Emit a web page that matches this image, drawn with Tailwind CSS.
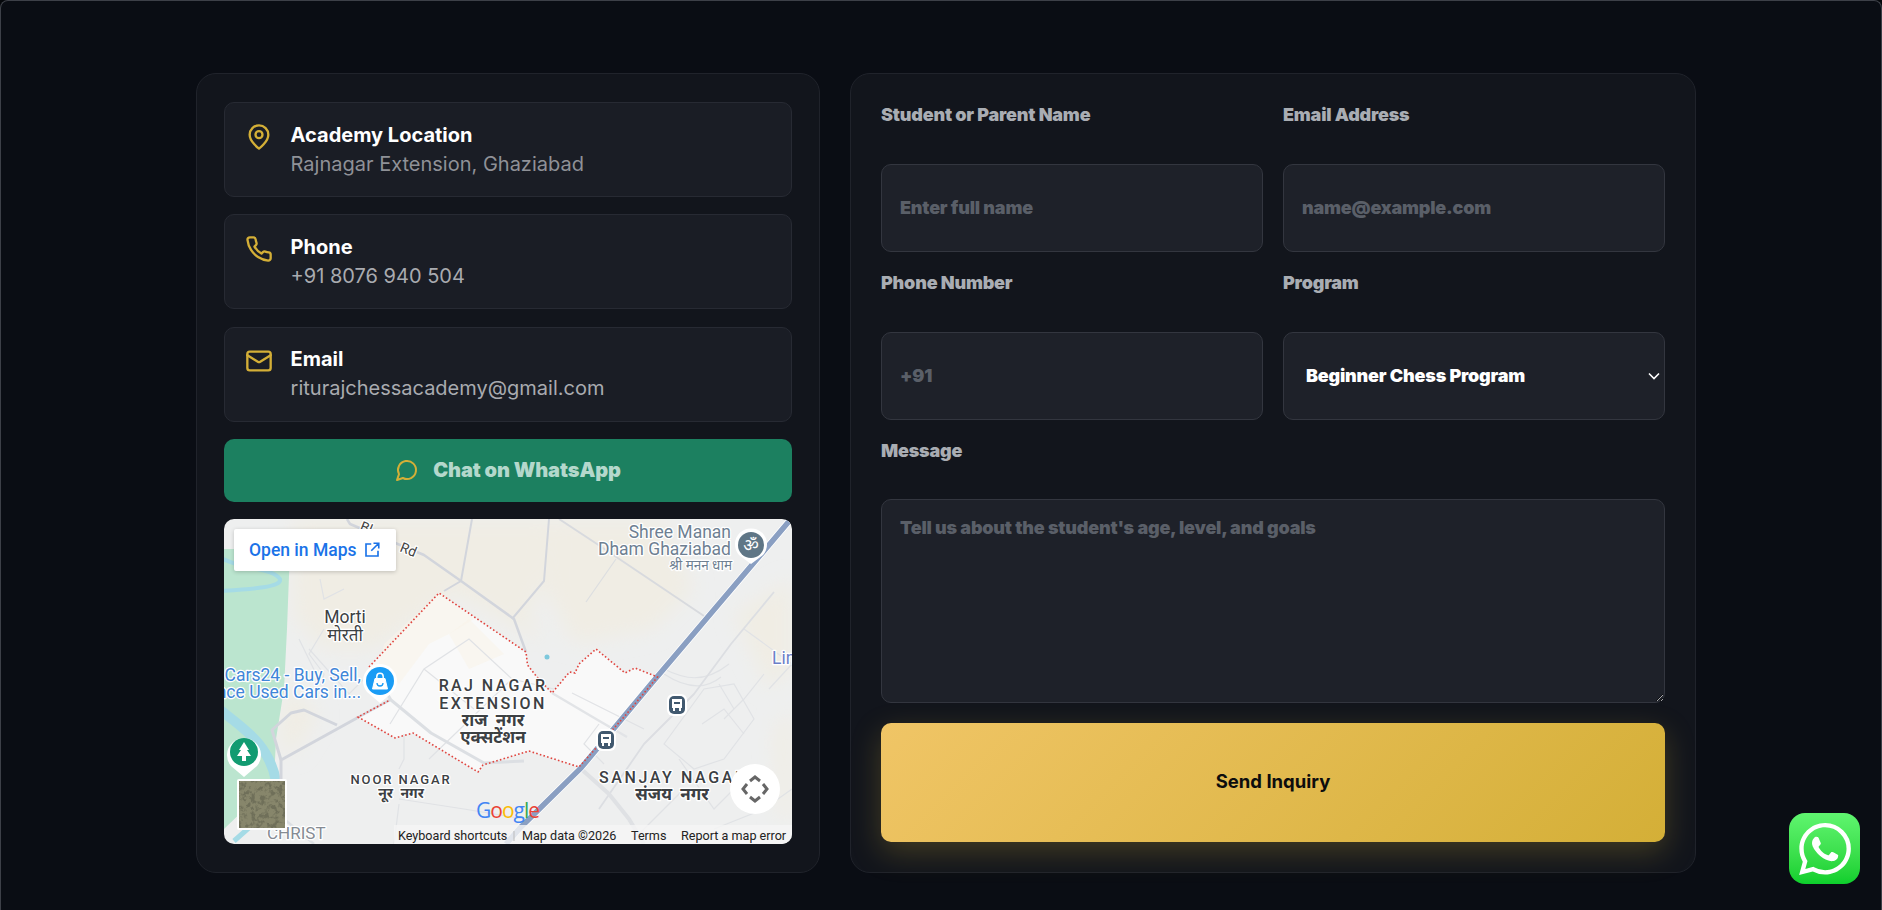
<!DOCTYPE html>
<html lang="en" class="h-[910px] overflow-hidden">
<head>
<meta charset="UTF-8">
<meta name="viewport" content="width=device-width, initial-scale=1.0">
<title>Contact</title>
<script src="https://cdn.jsdelivr.net/npm/@tailwindcss/browser@4"></script>
</head>
<body class="h-[910px] bg-[#05070b] font-['Inter',sans-serif] overflow-hidden">

<div class="h-[910px] bg-[#0a0d14] border border-b-0 border-[#3d4048] rounded-t-[8px] pt-[72px] pl-[195px]">
  <div class="flex gap-[30px] w-[1500px]">

    <!-- contact column -->
    <section class="w-[624px] h-[800px] shrink-0 bg-[#12151c] border border-[#20232b] rounded-[20px] p-[27px] pt-[28px] flex flex-col gap-[17.6px]">

      <div class="h-[94.8px] bg-[#1a1d25] border border-[#272a33] rounded-[10px] px-[20px] py-[17.6px] flex gap-[17.6px]">
        <svg class="w-[28px] h-[28px] mt-[2px] shrink-0" viewBox="0 0 24 24" fill="none" stroke="#d4af37" stroke-width="2" stroke-linecap="round" stroke-linejoin="round"><path d="M20 10c0 6-8 12-8 12s-8-6-8-12a8 8 0 0 1 16 0Z"/><circle cx="12" cy="10" r="3"/></svg>
        <div class="text-[20px] leading-[29px]">
          <div class="font-bold text-white">Academy Location</div>
          <div class="text-[#8f9197]">Rajnagar Extension, Ghaziabad</div>
        </div>
      </div>

      <div class="h-[94.8px] bg-[#1a1d25] border border-[#272a33] rounded-[10px] px-[20px] py-[17.6px] flex gap-[17.6px]">
        <svg class="w-[28px] h-[28px] mt-[2px] shrink-0" viewBox="0 0 24 24" fill="none" stroke="#d4af37" stroke-width="2" stroke-linecap="round" stroke-linejoin="round"><path d="M22 16.92v3a2 2 0 0 1-2.18 2 19.79 19.79 0 0 1-8.63-3.07 19.5 19.5 0 0 1-6-6 19.79 19.79 0 0 1-3.07-8.67A2 2 0 0 1 4.11 2h3a2 2 0 0 1 2 1.72 12.84 12.84 0 0 0 .7 2.81 2 2 0 0 1-.45 2.11L8.09 9.91a16 16 0 0 0 6 6l1.27-1.27a2 2 0 0 1 2.11-.45 12.84 12.84 0 0 0 2.81.7A2 2 0 0 1 22 16.92z"/></svg>
        <div class="text-[20px] leading-[29px]">
          <div class="font-bold text-white">Phone</div>
          <div class="text-[#a9abb0]">+91 8076 940 504</div>
        </div>
      </div>

      <div class="h-[94.8px] bg-[#1a1d25] border border-[#272a33] rounded-[10px] px-[20px] py-[17.6px] flex gap-[17.6px]">
        <svg class="w-[28px] h-[28px] mt-[2px] shrink-0" viewBox="0 0 24 24" fill="none" stroke="#d4af37" stroke-width="2" stroke-linecap="round" stroke-linejoin="round"><rect x="2" y="4" width="20" height="16" rx="2"/><path d="m22 7-8.97 5.7a1.94 1.94 0 0 1-2.06 0L2 7"/></svg>
        <div class="text-[20px] leading-[29px]">
          <div class="font-bold text-white">Email</div>
          <div class="text-[#a9abb0]">riturajchessacademy@gmail.com</div>
        </div>
      </div>

      <a class="h-[62.4px] bg-[#1c8060] rounded-[10px] flex items-center justify-center gap-[14px] text-[20px] tracking-[-0.1px] font-black text-[#b4d8cc]">
        <svg class="w-[24px] h-[24px]" viewBox="0 0 24 24" fill="none" stroke="#d4af37" stroke-width="2" stroke-linecap="round" stroke-linejoin="round"><path d="M7.9 20A9 9 0 1 0 4 16.1L2 22Z"/></svg>
        Chat on WhatsApp
      </a>

      <!-- map -->
      <div class="relative h-[325px] rounded-[10px] overflow-hidden bg-[#eeefef]">
        <svg class="block" width="568" height="325" viewBox="0 0 568 325" font-family="Roboto, 'Noto Sans', sans-serif">
          <defs>
            <filter id="soft" x="-20%" y="-20%" width="140%" height="140%"><feGaussianBlur stdDeviation="10"/></filter>
            <filter id="grain" x="0" y="0" width="100%" height="100%"><feTurbulence type="fractalNoise" baseFrequency="0.22" numOctaves="3" seed="4"/><feColorMatrix values="0 0 0 0 0.16  0 0 0 0 0.16  0 0 0 0 0.1  3.5 3.5 0 0 -3.3"/></filter>
          </defs>

          <!-- land tints -->
          <g filter="url(#soft)" fill="#f0ede4">
            <path d="M68 0H330L320 60 305 95 320 125 230 75 150 130 100 130 70 100Z"/>
            <path d="M330 0H440L470 70 430 110 350 125 320 70Z"/>
            <path d="M510 95 568 60V150L545 170Z"/>
            <path d="M550 210 568 190V300H555Z"/>
            <path d="M60 165 95 195 70 235 55 230Z"/>
          </g>
          <path d="M0 30H66L63 110 60 170 52 220 50 262 0 310Z" fill="#bbe5cf"/>
          <path d="M-5 38C20 52 48 48 56 60 58 68 30 70-5 72" fill="none" stroke="#a5dbe6" stroke-width="4"/>
          <path d="M-5 190C20 210 45 225 52 262" fill="none" stroke="#a5dbe6" stroke-width="10"/>
          <path d="M10 322 35 300 48 300" fill="none" stroke="#a5dbe6" stroke-width="5"/>

          <!-- raj nagar area -->
          <path d="M215 74 302 133 303.5 146 313 158 328 174 345.5 153 351 154 355 145 372 130 401 154 411 149 433.5 158 355 248 305 232 259 246 254 253 189 214 171 219 134 198 166 181 145 148Z" fill="#f9f9f9"/>
          <path d="M215 74 160 125 155 145 175 165 205 125 225 115 250 100Z" fill="#f8f3ea" opacity=".6"/>
          <path d="M225 115 245 100 280 135 245 150Z" fill="#f8f4ea" opacity=".6"/>

          <!-- thin streets -->
          <g fill="none" stroke="#e0e2e5" stroke-width="1.2">
            <path d="M75 120 97 165 100 155 85 135 100 110"/>
            <path d="M96 60 100 80 120 70M85 130 125 175 140 160"/>
            <path d="M166 205 200 150 245 120 288 160 205 240"/>
            <path d="M200 150 250 190M288 160 330 170M180 215 180 240 175 250M175 285 170 325M175 280 240 290 300 300"/>
            <path d="M348 174 420 210M375 205 360 225 380 245"/>
            <path d="M440 225 480 170 510 165 530 200 500 240 470 250 440 225ZM478 205 500 190 520 215M455 240 490 290 510 270M495 165 510 190"/>
            <path d="M520 110 568 145 545 170M500 200 520 180 540 155M410 320 460 270M490 310 540 290 568 270"/>
            <path d="M440 155C460 168 480 172 497 158"/>
            <path d="M440 150C460 160 480 165 505 145"/>
          </g>

          <!-- roads -->
          <g fill="none" stroke="#d2d5dc" stroke-width="2.5" stroke-linejoin="round">
            <path d="M123 0 126 5 200 36 237 62 290 100 302 133"/>
            <path d="M248 0 237 62 220 72" stroke-width="2"/>
            <path d="M325 0 320 62 288 100" stroke-width="2"/>
            <path d="M335 0 373 25 480 97" stroke="#d8dade" stroke-width="2"/>
            <path d="M392 40 362 83" stroke="#dcdee0" stroke-width="1.2"/>
            <path d="M550 73 507 125 470 175 420 225 375 290" stroke="#dcdee2" stroke-width="1.8"/>
            <path d="M133 199 57 241 57 275" stroke-width="3"/>
            <path d="M57 241 48 211 67 194 80 191 113 206" stroke-width="3"/>
            <path d="M133 199 166 181"/>
            <path d="M148 150 167 181 207 214 260 244 300 242" stroke="#dcdfe3" stroke-width="3"/>
            <path d="M328 174 372 200 403 218" stroke="#e2e4e7"/>
            <path d="M355 248 385 275 405 300 420 325" stroke="#dfe1e4" stroke-width="4"/>
            <path d="M60 300 90 325" stroke="#dcdfe3"/>
          </g>

          <!-- highway -->
          <path d="M567 0 427 165 357 249 297 308 282 325" fill="none" stroke="#fff" stroke-width="7"/>
          <path d="M567 0 427 165 357 249 297 308 282 325" fill="none" stroke="#8a9fc2" stroke-width="5.5"/>

          <!-- boundary -->
          <path d="M145 148 215 74 302 133 303.5 146 313 158 328 174 345.5 153 351 154 355 145 372 130 401 154 411 149 433.5 158 400 198 355 248 305 232 259 246 254 253 189 214 171 219 134 198 166 181" fill="none" stroke="#e0453f" stroke-width="1.6" stroke-dasharray="1.6 2.2"/>

          <!-- place labels -->
          <g paint-order="stroke" stroke="#fff" stroke-width="2.5" stroke-linejoin="round">
            <g fill="#6e7f92" font-size="17.5" text-anchor="end">
              <text x="507" y="19">Shree Manan</text>
              <text x="507" y="36">Dham Ghaziabad</text>
              <text x="508" y="51" font-size="13.5">श्री मनन धाम</text>
            </g>
            <text x="548" y="145" fill="#6b7fc8" font-size="17.5">Lin</text>
            <g fill="#3c4043" text-anchor="middle">
              <text x="121" y="104" font-size="17.5">Morti</text>
              <text x="121" y="122" font-size="17">मोरती</text>
              <g font-size="16" font-weight="500" letter-spacing="2.4">
                <text x="269" y="172">RAJ NAGAR</text>
                <text x="269" y="190">EXTENSION</text>
              </g>
              <g font-size="17" font-weight="700">
                <text x="269" y="207" word-spacing="4">राज नगर</text>
                <text x="269" y="224">एक्सटेंशन</text>
              </g>
              <text x="177" y="265" font-size="13" font-weight="500" letter-spacing="1.9">NOOR NAGAR</text>
              <text x="177" y="279" font-size="14" font-weight="700" word-spacing="4">नूर नगर</text>
              <text x="448" y="281" font-size="17" font-weight="700" word-spacing="4">संजय नगर</text>
            </g>
            <text x="375" y="264" fill="#3c4043" font-size="16" font-weight="500" letter-spacing="2.6">SANJAY NAGAR</text>
            <g fill="#3f86d8" font-size="17.5" text-anchor="end">
              <text x="137" y="162">Cars24 - Buy, Sell,</text>
              <text x="137" y="179">nce Used Cars in...</text>
            </g>
            <text x="43" y="320" fill="#858b93" font-size="17">CHRIST</text>
            <text x="175" y="32" transform="rotate(22 175 32)" fill="#444" font-size="14">Rd</text>
            <text x="135" y="11" transform="rotate(22 135 11)" fill="#444" font-size="14">Bl</text>
          </g>

          <!-- pins -->
          <path d="M156 184 143 173A17 17 0 1 1 169 173Z" fill="#fff"/>
          <circle cx="156" cy="162" r="14" fill="#1a9cf5"/>
          <path d="M151 159.500H161L163.500 170H148.500Z" fill="#fff" stroke="#fff" stroke-linejoin="round"/>
          <path d="M152.800 160V157.500A3.200 3.200 0 0 1 159.200 157.500V160" fill="none" stroke="#fff" stroke-width="1.5"/>
          <path d="M153 164A3 3 0 0 0 159 164" fill="none" stroke="#1a9cf5" stroke-width="1.3"/>
          <path d="M20 258 7 247A17 17 0 1 1 33 247Z" fill="#fff"/>
          <circle cx="20" cy="233" r="14" fill="#129b71"/>
          <path d="M20 223 25 231H23L27 237H22V242H18V237H13L17 231H15Z" fill="#fff"/>
          <path d="M527 45 515 36A16 16 0 1 1 539 36Z" fill="#fff"/>
          <circle cx="527" cy="26" r="13" fill="#5f7686"/>
          <text x="527" y="32" text-anchor="middle" font-size="17" fill="#fff">ॐ</text>
          <g>
            <rect x="372" y="210" width="20" height="22" rx="6" fill="#fff"/>
            <rect x="374" y="212" width="16" height="18" rx="5" fill="#41596f"/>
            <path d="M377 215H387V224H377Z" fill="#fff"/><path d="M379 218H385V220H379Z" fill="#41596f"/>
            <path d="M378 224H380V227H378ZM384 224H386V227H384Z" fill="#fff"/>
            <rect x="443" y="175" width="20" height="22" rx="6" fill="#fff"/>
            <rect x="445" y="177" width="16" height="18" rx="5" fill="#41596f"/>
            <path d="M448 180H458V189H448Z" fill="#fff"/><path d="M450 183H456V185H450Z" fill="#41596f"/>
            <path d="M449 189H451V192H449ZM455 189H457V192H455Z" fill="#fff"/>
          </g>
          <circle cx="323" cy="138" r="2.5" fill="#7dc8dc"/>

          <!-- logo -->
          <text x="252" y="299" font-size="21" font-family="'Open Sans', sans-serif" letter-spacing="-1"><tspan fill="#4285f4">G</tspan><tspan fill="#ea4335">o</tspan><tspan fill="#fbbc05">o</tspan><tspan fill="#4285f4">g</tspan><tspan fill="#34a853">l</tspan><tspan fill="#ea4335">e</tspan></text>

          <!-- satellite thumb -->
          <rect x="13" y="260" width="50" height="51" rx="2" fill="#fff"/>
          <rect x="15" y="262" width="46" height="47" fill="#87866b"/>
          <rect x="15" y="262" width="46" height="47" filter="url(#grain)"/>

          <!-- attribution -->
          <rect x="170" y="306" width="398" height="19" fill="#f5f5f5" opacity=".8"/>
          <g font-size="12.6" fill="#222">
            <text x="174" y="321">Keyboard shortcuts</text>
            <text x="298" y="321">Map data ©2026</text>
            <text x="407" y="321">Terms</text>
            <text x="457" y="321">Report a map error</text>
          </g>
          <path d="M290 312V322" stroke="#bbb"/>
        </svg>

        <a class="absolute left-[10px] top-[10px] w-[162px] h-[42px] bg-white rounded-[2px] shadow-[0_1px_4px_rgba(0,0,0,0.2)] flex items-center pl-[15px] gap-[6px] font-['Roboto',sans-serif] font-medium text-[17.5px] text-[#1a73e8]">
          Open in Maps
          <svg class="w-[18px] h-[18px]" viewBox="0 0 24 24" fill="none" stroke="#1a73e8" stroke-width="2.2"><path d="M11 4H4V20H20V13M14 3H21V10M21 3 11 13"/></svg>
        </a>

        <button class="absolute left-[506px] top-[245px] w-[50px] h-[50px] rounded-full bg-white flex items-center justify-center">
          <svg class="w-[30px] h-[30px]" viewBox="0 0 30 30" fill="none" stroke="#666" stroke-width="3"><path d="M10 7 15 3 20 7M10 23 15 27 20 23M7 10 3 15 7 20M23 10 27 15 23 20"/></svg>
        </button>
      </div>
    </section>

    <!-- inquiry form -->
    <form class="w-[846px] h-[800px] shrink-0 bg-[#12151c] border border-[#20232b] rounded-[20px] p-[30px]">
      <div class="grid grid-cols-2 gap-x-[20px] gap-y-[20px]">
        <div>
          <label class="block mb-[38px] text-[18px] tracking-[-0.2px] leading-[22px] font-black text-[#a9adb3]">Student or Parent Name</label>
          <input type="text" placeholder="Enter full name" class="w-full h-[88px] px-[18px] pb-[2px] bg-[#1e2129] border border-[#33363f] rounded-[10px] text-[18px] tracking-[-0.2px] font-black placeholder:text-[#5a5f68]">
        </div>
        <div>
          <label class="block mb-[38px] text-[18px] tracking-[-0.2px] leading-[22px] font-black text-[#a9adb3]">Email Address</label>
          <input type="email" placeholder="name@example.com" class="w-full h-[88px] px-[18px] pb-[2px] bg-[#1e2129] border border-[#33363f] rounded-[10px] text-[18px] tracking-[-0.2px] font-black placeholder:text-[#5a5f68]">
        </div>
        <div>
          <label class="block mb-[38px] text-[18px] tracking-[-0.2px] leading-[22px] font-black text-[#a9adb3]">Phone Number</label>
          <input type="tel" placeholder="+91" class="w-full h-[88px] px-[18px] pb-[2px] bg-[#1e2129] border border-[#33363f] rounded-[10px] text-[18px] tracking-[-0.2px] font-black placeholder:text-[#5a5f68]">
        </div>
        <div>
          <label class="block mb-[38px] text-[18px] tracking-[-0.2px] leading-[22px] font-black text-[#a9adb3]">Program</label>
          <div class="relative">
            <select class="w-full h-[88px] pl-[22px] pr-[30px] pb-[2px] appearance-none bg-[#1e2129] border border-[#33363f] rounded-[10px] text-[18px] tracking-[-0.2px] font-black text-white">
              <option>Beginner Chess Program</option>
            </select>
            <svg class="absolute right-[5px] top-[40px] w-[12px] h-[8px]" viewBox="0 0 12 8" fill="none" stroke="#fff" stroke-width="1.6"><path d="M1 1.500 6 6.500 11 1.500"/></svg>
          </div>
        </div>
        <div class="col-span-2">
          <label class="block mb-[37px] text-[18px] tracking-[-0.2px] leading-[22px] font-black text-[#a9adb3]">Message</label>
          <textarea placeholder="Tell us about the student's age, level, and goals" class="block w-full h-[203.500px] px-[18px] pt-[14px] bg-[#1e2129] border border-[#33363f] rounded-[10px] text-[18px] tracking-[-0.2px] font-black placeholder:text-[#5a5f68]"></textarea>
        </div>
        <button type="button" class="col-span-2 h-[119px] rounded-[10px] bg-linear-[135deg,#f0c566,#d4af37] shadow-[0_10px_30px_rgba(212,175,55,0.25)] text-[18.5px] font-bold text-[#0d0d0d]">Send Inquiry</button>
      </div>
    </form>
  </div>
</div>

<a class="fixed right-[22px] bottom-[26px] w-[71px] h-[71px] rounded-[16px] bg-linear-to-b from-[#5ff56f] to-[#0ccf2c] flex items-center justify-center">
  <svg class="w-[52px] h-[52px]" viewBox="0 0 24 24" fill="#fff"><path d="M17.472 14.382c-.297-.149-1.758-.867-2.03-.967-.273-.099-.471-.148-.67.15-.197.297-.767.966-.94 1.164-.173.199-.347.223-.644.075-.297-.15-1.255-.463-2.39-1.475-.883-.788-1.48-1.761-1.653-2.059-.173-.297-.018-.458.13-.606.134-.133.298-.347.446-.52.149-.174.198-.298.298-.497.099-.198.05-.371-.025-.52-.075-.149-.669-1.612-.916-2.207-.242-.579-.487-.5-.669-.51-.173-.008-.371-.01-.57-.01-.198 0-.52.074-.792.372-.272.297-1.04 1.016-1.04 2.479 0 1.462 1.065 2.875 1.213 3.074.149.198 2.096 3.2 5.077 4.487.709.306 1.262.489 1.694.625.712.227 1.36.195 1.871.118.571-.085 1.758-.719 2.006-1.413.248-.694.248-1.289.173-1.413-.074-.124-.272-.198-.57-.347m-5.421 7.403h-.004a9.87 9.87 0 01-5.031-1.378l-.361-.214-3.741.982.998-3.648-.235-.374a9.86 9.86 0 01-1.51-5.26c.001-5.45 4.436-9.884 9.888-9.884 2.64 0 5.122 1.03 6.988 2.898a9.825 9.825 0 012.893 6.994c-.003 5.45-4.437 9.884-9.885 9.884m8.413-18.297A11.815 11.815 0 0012.05 0C5.495 0 .16 5.335.157 11.892c0 2.096.547 4.142 1.588 5.945L.057 24l6.305-1.654a11.882 11.882 0 005.683 1.448h.005c6.554 0 11.89-5.335 11.893-11.893a11.821 11.821 0 00-3.48-8.413z"/></svg>
</a>

</body>
</html>
